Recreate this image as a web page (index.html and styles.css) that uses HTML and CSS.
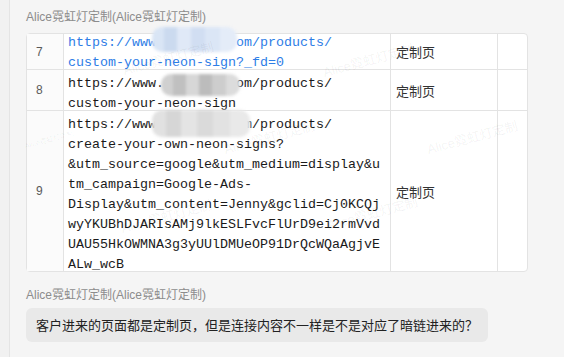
FILE: index.html
```html
<!DOCTYPE html>
<html>
<head>
    <title>Chat</title>
    <link rel="stylesheet" href="styles.css">
</head>
<body>
    <div class="chat">
        <!-- table message -->
        <div class="msg">
            <p class="sender">Alice霓虹灯定制(Alice霓虹灯定制)</p>
            <table class="sheet">
                <colgroup>
                    <col class="c-idx"><col class="c-url"><col class="c-type"><col class="c-empty">
                </colgroup>
                <tr class="cut">
                    <td class="idx">7</td>
                    <td class="url link"><div class="lines">https://www<span class="mask m7">.xxxxxxx.c</span>om/products/<br>custom-your-neon-sign?_fd=0</div></td>
                    <td class="type">定制页</td>
                    <td></td>
                </tr>
                <tr>
                    <td class="idx">8</td>
                    <td class="url"><div class="lines">https://www.<span class="mask m8">xxxxxxx.c</span>om/products/<br>custom-your-neon-sign</div></td>
                    <td class="type">定制页</td>
                    <td></td>
                </tr>
                <tr>
                    <td class="idx">9</td>
                    <td class="url"><div class="lines">https://www<span class="mask m9">.xxxxxxx.c</span>om/products/<br>create-your-own-neon-signs?<br>&amp;utm_source=google&amp;utm_medium=display&amp;u<br>tm_campaign=Google-Ads-<br>Display&amp;utm_content=Jenny&amp;gclid=Cj0KCQj<br>wyYKUBhDJARIsAMj9lkESLFvcFlUrD9ei2rmVvd<br>UAU55HkOWMNA3g3yUUlDMUeOP91DrQcWQaAgjvE<br>ALw_wcB</div></td>
                    <td class="type">定制页</td>
                    <td></td>
                </tr>
            </table>
        </div>

        <!-- text message -->
        <div class="msg">
            <p class="sender second">Alice霓虹灯定制(Alice霓虹灯定制)</p>
            <div class="bubble">客户进来的页面都是定制页，但是连接内容不一样是不是对应了暗链进来的？</div>
        </div>
    </div>

    <div class="watermarks">
        <span class="wm" style="left:122px; top:51px">Alice霓虹灯定制</span>
        <span class="wm" style="left:322px; top:53px">Alice霓虹灯定制</span>
        <span class="wm" style="left:223px; top:130px">Alice霓虹灯定制</span>
        <span class="wm" style="left:426px; top:130px">Alice霓虹灯定制</span>
        <span class="wm" style="left:120px; top:209px">Alice霓虹灯定制</span>
        <span class="wm" style="left:326px; top:206px">Alice霓虹灯定制</span>
        <span class="wm small" style="left:24px; top:135px">Alice霓虹灯定制</span>
    </div>
</body>
</html>
```

FILE: styles.css
```css
body { margin: 0; background-color: #f1f1f1; font-family: "Liberation Sans", "Noto Sans CJK SC", sans-serif; position: relative; height: 357px; overflow: hidden; }
.chat { margin-left: 9px; border-left: 1px solid #e4e4e4; background-color: #f5f5f5; height: 357px; padding: 9px 0 0 16px; box-sizing: border-box; }
.sender { margin: 0 0 8px; font-size: 12px; line-height: 16px; color: #8c8c8c; }
.sender.second { margin: 15px 0 5px; }

.sheet { border-collapse: separate; border-spacing: 0; table-layout: fixed; width: 501px; background-color: #fff; border: 1px solid #e3e3e3; border-radius: 4px; }
.c-idx { width: 37px; }
.c-url { width: 327px; }
.c-type { width: 107px; }
.c-empty { width: 29px; }
.sheet td { border-right: 1px solid #e3e3e3; border-bottom: 1px solid #e3e3e3; padding: 0; vertical-align: middle; }
.sheet td:last-child { border-right: none; }
.sheet tr:last-child td { border-bottom: none; }
.idx { background-color: #fbfbfb; padding: 0 0 0 9px !important; font-size: 12px; color: #5a5a5a; }
.url { padding: 0 4px !important; font-family: "Liberation Mono", monospace; font-size: 13.33px; line-height: 20px; color: #1a1a1a; white-space: nowrap; }
.url.link { color: #2d7de6; }
.lines { padding-top: 4px; margin-bottom: -4px; }
.cut .lines { margin-top: -5px; }
.type { padding: 0 0 0 5px !important; font-family: "Noto Sans CJK SC", sans-serif; font-size: 13px; color: #333; }

/* blurred domain */
.mask { position: relative; color: transparent; }
.mask::after { content: ""; position: absolute; border-radius: 10px; filter: blur(1.5px); }
.m7::after { left: -4px; right: -1px; top: -8px; bottom: -2px; background: linear-gradient(90deg, #d9e5f5 0 14%, #cbdaef 14% 30%, #e0e9f7 30% 46%, #d1def2 46% 62%, #dbe6f6 62% 80%, #e4ecf8 80%); }
.m8::after { left: -3px; right: -4px; top: -2px; bottom: -5px; background: linear-gradient(90deg, #d0d0d0 0 15%, #c0c0c0 15% 32%, #d7d7d7 32% 48%, #bcbcbc 48% 64%, #cdcdcd 64% 82%, #dcdcdc 82%); }
.m9::after { left: -4px; right: -14px; top: -7px; bottom: -5px; background: linear-gradient(90deg, #e1e1e1 0 14%, #d6d6d6 14% 30%, #e4e4e4 30% 46%, #dadada 46% 62%, #e2e2e2 62% 80%, #e9e9e9 80%); }

.bubble { display: inline-block; height: 34px; line-height: 34px; padding: 0 10px; border-radius: 6px; background-color: #e9e9e9; font-family: "Noto Sans CJK SC", sans-serif; font-size: 13px; color: #222; }

.watermarks { position: absolute; inset: 0; pointer-events: none; }
.wm { position: absolute; font-size: 13px; line-height: 16px; white-space: nowrap; color: rgba(0, 0, 0, 0.06); transform: rotate(-15deg); }
.wm.small { font-size: 7px; line-height: 9px; }
```
